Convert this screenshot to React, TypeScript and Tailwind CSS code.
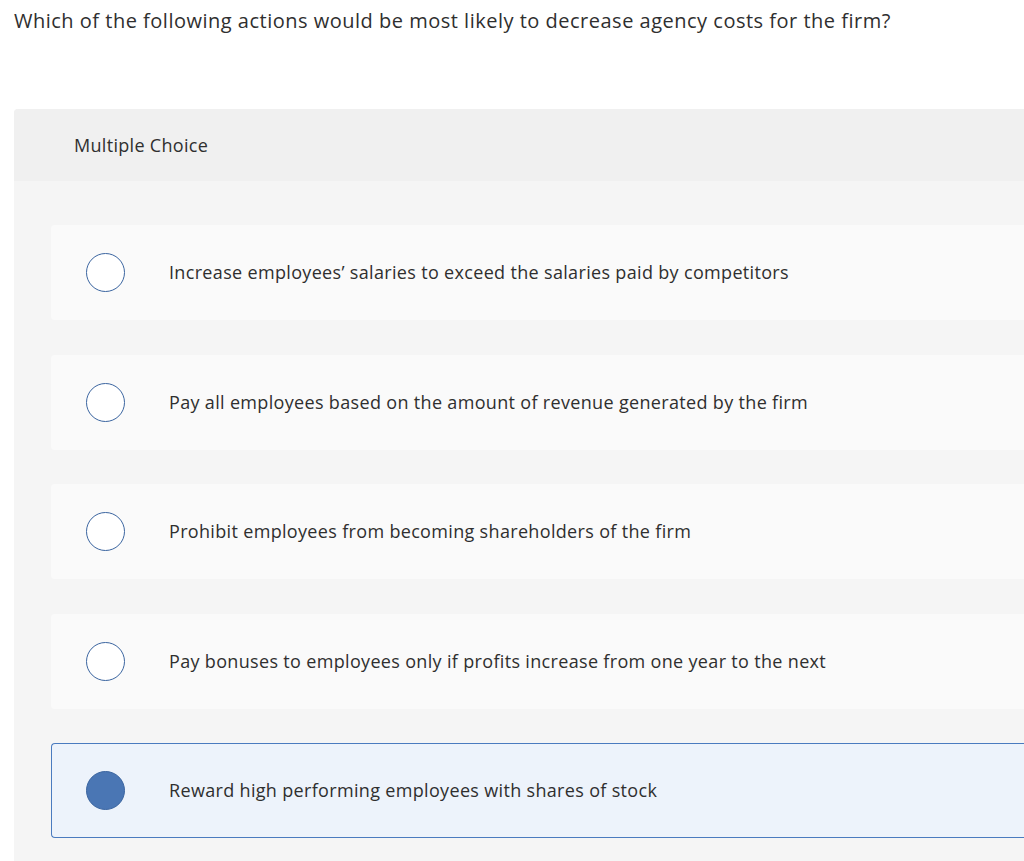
import React from "react";

const options = [
  "Increase employees\u2019 salaries to exceed the salaries paid by competitors",
  "Pay all employees based on the amount of revenue generated by the firm",
  "Prohibit employees from becoming shareholders of the firm",
  "Pay bonuses to employees only if profits increase from one year to the next",
  "Reward high performing employees with shares of stock",
];

const selected = 4;

export default function App() {
  return (
    <div
      className="min-h-[861px] bg-white text-[#2f2f2f]"
      style={{ fontFamily: '"Open Sans", "Liberation Sans", Arial, sans-serif' }}
    >
      <h1 className="pl-[14px] pt-[8px] text-[20px] leading-[26px] tracking-[0.5px]">
        Which of the following actions would be most likely to decrease agency costs for the firm?
      </h1>

      <div className="ml-[14px] mt-[75px] rounded-tl-[4px] bg-[#f5f5f5] pb-[25px]">
        <div className="flex h-[72px] items-center rounded-tl-[4px] bg-[#f0f0f0] pl-[60px] text-[18px] tracking-[0.3px]">
          Multiple Choice
        </div>

        <div className="flex flex-col gap-[34.5px] pl-[37px] pt-[44px]">
          {options.map((text, i) => {
            const isSel = i === selected;
            return (
              <div
                key={i}
                className={`flex h-[95px] items-center rounded-l-[4px] ${
                  isSel
                    ? "border border-r-0 border-[#4a7bbf] bg-[#edf3fb] pl-[34px]"
                    : "bg-[#fafafa] pl-[35px]"
                }`}
              >
                <span
                  className={`h-[39px] w-[39px] shrink-0 rounded-full border-[1.5px] border-[#3b65a0] ${
                    isSel ? "bg-[#4a76b4]" : "bg-white"
                  }`}
                />
                <span className="ml-[44px] text-[18px] tracking-[0.33px]">{text}</span>
              </div>
            );
          })}
        </div>
      </div>
    </div>
  );
}
